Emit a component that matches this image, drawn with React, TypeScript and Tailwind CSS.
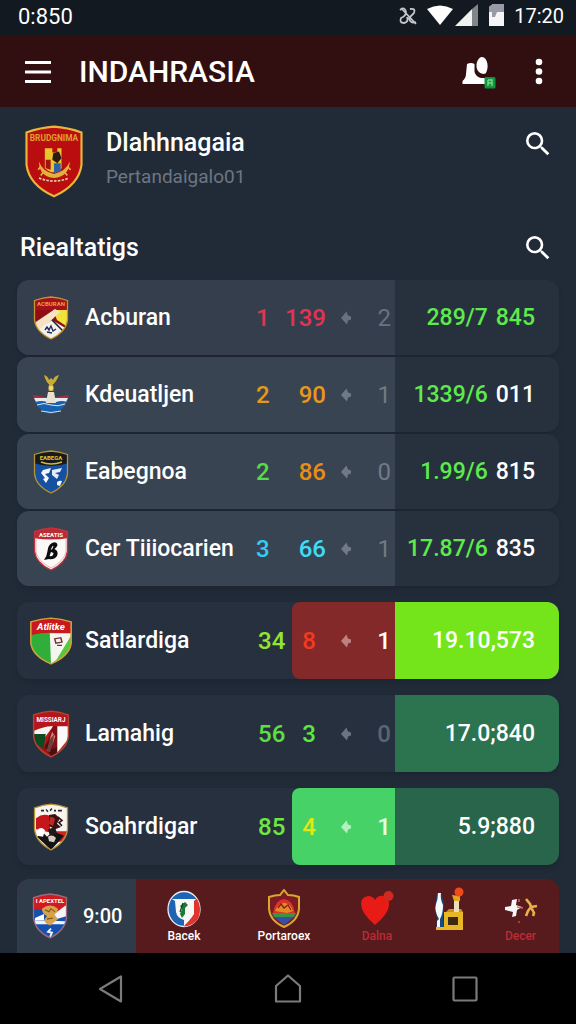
import type { ReactNode } from 'react'
import { MdSearch } from 'react-icons/md'
import clsx from 'clsx'

const SHIELD = 'M1.5 4.5Q10 1.5 18 1Q26 1.5 34.5 4.5V24Q33 36 18 43Q3 36 1.5 24Z'

type ShieldProps = {
  id: string
  border: string
  fill: string
  className?: string
  children?: ReactNode
}

function Shield({ id, border, fill, className, children }: ShieldProps) {
  return (
    <svg viewBox="0 0 36 44" preserveAspectRatio="none" className={className} aria-hidden="true">
      <clipPath id={id}>
        <path d={SHIELD} />
      </clipPath>
      <g clipPath={`url(#${id})`}>
        <rect width="36" height="44" fill={fill} />
        {children}
      </g>
      <path d={SHIELD} fill="none" stroke={border} strokeWidth="1.3" />
    </svg>
  )
}

function Banner({ text, fill, y = 10 }: { text: string; fill: string; y?: number }) {
  return (
    <text x="18" y={y} fontSize="6" fontWeight="700" textAnchor="middle" fill={fill}>
      {text}
    </text>
  )
}

function ClubCrest() {
  return (
    <Shield id="club" border="#e9b53a" fill="#b90d10" className="h-[73px] w-[60px]">
      <text x="18" y="9.5" fontSize="5" fontWeight="700" textAnchor="middle" fill="#e0a02c">
        BRUDGNIMA
      </text>
      <path d="M12.500 14H17V16.500H20V14H22.500V26Q18 31 12.500 26Z" fill="#e8c62c" />
      <path d="M17.500 17L21 16L22.500 20L20 23L17 21Z" fill="#2a1c14" />
      <path d="M18 23H22V28L18 29Z" fill="#2f62a8" />
      <path d="M13 21H16V27L13 26Z" fill="#a01410" />
      <path d="M9 22Q9 31 18 32Q27 31 27.500 22Q25 28 18 29.500Q11 28 9 22Z" fill="#e3b13b" />
      <path d="M10 25L8.500 27M12 28L10 30.500M26 25L28 27M24 28L26 30.500" stroke="#e3b13b" strokeWidth="1" />
      <path d="M9 32Q18 35.500 27 32" fill="none" stroke="#e7d9ae" strokeWidth="1" strokeDasharray="1.500 0.800" />
    </Shield>
  )
}

function AcburanCrest() {
  return (
    <Shield id="acburan" border="#c9932f" fill="#a3121a" className="h-11 w-9">
      <path d="M0 14H36V44H0Z" fill="#8d0f14" />
      <path d="M20 14H36V32L24 24Z" fill="#f0e43c" />
      <path d="M0 28L22 13L27 16L6 36Z" fill="#f6e3c4" />
      <path d="M5 34L19 24L34 33L18 44Z" fill="#f4f2ee" />
      <path d="M19 24L33 38" stroke="#20242a" strokeWidth="1.600" />
      <path d="M12 34L14 31L16 34L18 30L20 35L23 33M14 36L19 37" fill="none" stroke="#232c55" strokeWidth="1.400" />
      <Banner text="ACBURAN" fill="#e8a13a" />
    </Shield>
  )
}

function KdeuCrest() {
  return (
    <svg viewBox="0 0 38 42" className="h-[42px] w-[38px]" aria-hidden="true">
      <path d="M1 21L14 23H24L37 21L35 27H3Z" fill="#a92e38" />
      <path d="M2 24L36 24L34 28H4Z" fill="#e9e9ee" />
      <path d="M3 28Q10 26 15 28L19 29L24 28Q30 26 35 28Q30 38 19 40Q8 38 3 28Z" fill="#1760b0" />
      <path d="M5 31Q12 28 19 31Q26 33 33 30" fill="none" stroke="#d6e8f5" strokeWidth="1" />
      <path d="M9 37Q19 40 29 37" fill="none" stroke="#cfe1f0" strokeWidth="1" />
      <path d="M16 18H22L24 29H14Z" fill="#e7e1d2" />
      <path d="M17 17Q15 12 19 9Q23 12 21 17Z" fill="#d8b741" />
      <path d="M12 1Q14 9 19 12Q24 9 27 1Q22 2 21 6L19 4L17 6Q16 2 12 1Z" fill="#c9ab2f" />
      <circle cx="19" cy="14" r="2" fill="#f1dc83" />
    </svg>
  )
}

function EabeCrest() {
  return (
    <Shield id="eabe" border="#b8942f" fill="#1650a0" className="h-11 w-9">
      <path d="M0 0H36V13Q18 19 0 13Z" fill="#17191d" />
      <path d="M8 12Q18 16 29 12" fill="none" stroke="#d5ba33" strokeWidth="1.400" />
      <path d="M10 20L18 18L16 23L12 24L16 28L13 33L10 29L12 28L8 23Z" fill="#f3f6fa" />
      <path d="M19 20L29 18L27 22L22 23L26 25L24 29L19 25Z" fill="#e4edf6" />
      <path d="M24 32Q27 30 29 31L27 36L24 35Z" fill="#f3f6fa" />
      <Banner text="EABEGA" fill="#e2c432" />
    </Shield>
  )
}

function CerCrest() {
  return (
    <Shield id="cer" border="#c4303a" fill="#fbf8f8" className="h-11 w-9">
      <path d="M0 0H36V11Q18 14 0 11Z" fill="#b92c35" />
      <path d="M3 11V25Q5 34 18 41Q31 34 33 25V11" fill="none" stroke="#e7a4a8" strokeWidth="0.800" />
      <path
        d="M19 16Q24 14 24.500 18Q24 20 21.500 22Q26 24 24 29Q21 33 16 32L11 33Q14 29 14.500 24Q15 18 19 16ZM19.500 19L17.500 23Q20 22 20.500 19ZM18 25L16.500 29Q20 30 20.500 26Z"
        fill="#0d0d10"
        fillRule="evenodd"
      />
      <Banner text="ASEATIS" fill="#fff" />
    </Shield>
  )
}

function SatCrest() {
  return (
    <Shield id="sat" border="#d0a23a" fill="#2fae3a" className="h-12 w-11">
      <path d="M0 0H36V17Q18 12 0 17Z" fill="#c9181e" />
      <path d="M17 15H36L24 38L18 43Z" fill="#f5f5f0" />
      <path d="M35 16L21 42L36 30Z" fill="#55c93c" />
      <path d="M21 20L26 19L27 23L22 24ZM23 26H27" fill="none" stroke="#6f3434" strokeWidth="1.200" />
      <text x="18" y="12" fontSize="8" fontStyle="italic" fontWeight="700" textAnchor="middle" fill="#fff">
        Atlitke
      </text>
    </Shield>
  )
}

function LamCrest() {
  return (
    <Shield id="lam" border="#b4452f" fill="#b5161c" className="h-12 w-[38px]">
      <path d="M2 19Q14 14 20 15L10 28L2 22Z" fill="#f6f4f2" />
      <path d="M2 22L13 22L11 36L3 30Z" fill="#0c4a1f" />
      <path d="M20 15L11 36L18 42L24 40V15Z" fill="#831016" />
      <path d="M19 20L14 37L17 39L22 24Z" fill="#d98478" />
      <path d="M12 33L18 42H24V34L19 36L21 22Z" fill="#2b0c10" opacity="0.600" />
      <path d="M24 15H34V27L24 39Z" fill="#fbfafa" />
      <Banner text="MISSIARJ" fill="#fff" y={11} />
    </Shield>
  )
}

function SoahCrest() {
  return (
    <Shield id="soah" border="#b59334" fill="#f7f4f0" className="h-12 w-9">
      <path d="M3 14Q10 9 17 12V27L3 24Z" fill="#c5161b" />
      <path d="M22 26H36V34L24 36Z" fill="#cf2024" />
      <path d="M4 31L10 27L14 31L20 26L31 30L18 43Z" fill="#151213" />
      <path d="M4 25Q8 21 12 25L10 31L4 30Z" fill="#fff" />
      <path d="M16 11L22 10L27 14L24 19L28 22L22 24L16 21Z" fill="#3b1013" />
      <path d="M25 13L29 16L26 18L29 21" fill="none" stroke="#2a1416" strokeWidth="1.500" />
      <path d="M17 13Q20 12 22 15L20 21L16 19Z" fill="#be2a22" />
      <path d="M15 24L22 22L24 28L17 30Z" fill="#201a1a" />
      <path d="M15 31Q19 28 23 32L21 36L16 35Z" fill="#d3ccc4" />
      <path d="M8 7H11M13 6L15 8M17 7L19 5M21 7H23M25 7H29" fill="none" stroke="#23252b" strokeWidth="1.400" />
    </Shield>
  )
}

function TimeCrest() {
  return (
    <Shield id="time" border="#9c6a78" fill="#1550b0" className="h-[46px] w-9">
      <path d="M0 0H36V13L24 19L0 15Z" fill="#cf1a20" />
      <path d="M22 20L35 11V22L24 25Z" fill="#f5f5f8" />
      <path d="M0 26L36 27V30L0 30Z" fill="#eef2f9" />
      <path d="M3 24L12 20V26H3Z" fill="#fff" />
      <path d="M10 15Q18 9 26 15Q25 20 22 20L26 25L22 28L18 31L14 29L12 26L15 22Q10 20 10 15Z" fill="#d7a24a" />
      <path d="M13 16L17 18L19 15L23 18M15 25L21 24" fill="none" stroke="#79521b" strokeWidth="1" />
      <path d="M19 34L16 37L20 38L18 42" fill="none" stroke="#f2f6fb" strokeWidth="1.800" />
      <Banner text="I APEXTEL" fill="#fff" />
    </Shield>
  )
}

function Trend() {
  return (
    <svg viewBox="0 0 10 14" className="h-[14px] w-[10px]" aria-hidden="true">
      <path d="M0 7L5.500 0.500L7 4.500L10 5.500V8.500L7 9.500L6 13.500Z" fill="currentColor" />
    </svg>
  )
}

type Team = {
  name: string
  crest: ReactNode
  rank: string
  points: string
  diff: string
  total: string
  extra?: string
  rankColor: string
  pointsColor: string
  midColor: string
  totalColor: string
}

const topTeams: Team[] = [
  {
    name: 'Acburan', crest: <AcburanCrest />, rank: '1', points: '139', diff: '2', total: '289/7', extra: '845',
    rankColor: 'text-[#d93a52]', pointsColor: 'text-[#e23355]', midColor: 'bg-[#343e4c] text-[#69727c]', totalColor: 'text-[#5eea4c]',
  },
  {
    name: 'Kdeuatljen', crest: <KdeuCrest />, rank: '2', points: '90', diff: '1', total: '1339/6', extra: '011',
    rankColor: 'text-[#e39a1c]', pointsColor: 'text-[#e8981c]', midColor: 'bg-[#384452] text-[#717a84]', totalColor: 'text-white',
  },
  {
    name: 'Eabegnoa', crest: <EabeCrest />, rank: '2', points: '86', diff: '0', total: '1.99/6', extra: '815',
    rankColor: 'text-[#55dc45]', pointsColor: 'text-[#e98e13]', midColor: 'bg-[#384452] text-[#717a84]', totalColor: 'text-white',
  },
  {
    name: 'Cer Tiiiocarien', crest: <CerCrest />, rank: '3', points: '66', diff: '1', total: '17.87/6', extra: '835',
    rankColor: 'text-[#33cdf2]', pointsColor: 'text-[#3fdcf5]', midColor: 'bg-[#384452] text-[#717a84]', totalColor: 'text-white',
  },
]

const otherTeams = [
  {
    name: 'Satlardiga', crest: <SatCrest />, rank: '34', points: '8', diff: '1', total: '19.10,573',
    rankColor: 'text-[#93e62c]', pointsColor: 'text-[#f23a20]', scoreColor: 'bg-[#84292a]', trendColor: 'text-[#bf8080]', diffColor: 'text-white', totalBg: 'bg-[#75e51b]',
  },
  {
    name: 'Lamahig', crest: <LamCrest />, rank: '56', points: '3', diff: '0', total: '17.0;840',
    rankColor: 'text-[#5be03d]', pointsColor: 'text-[#5ce843]', scoreColor: '', trendColor: 'text-[#6b747f]', diffColor: 'text-[#5c6571]', totalBg: 'bg-[#2c7450]',
  },
  {
    name: 'Soahrdigar', crest: <SoahCrest />, rank: '85', points: '4', diff: '1', total: '5.9;880',
    rankColor: 'text-[#6fe743]', pointsColor: 'text-[#e3e514]', scoreColor: 'bg-[#47d267]', trendColor: 'text-[#b4f0be]', diffColor: 'text-[#e5ffe9]', totalBg: 'bg-[#28654a]',
  },
]

function TeamLabel({ crest, name }: { crest: ReactNode; name: string }) {
  return (
    <>
      <span className="flex w-[68px] shrink-0 justify-center">{crest}</span>
      <span className="flex-1 whitespace-nowrap text-[23px] leading-8 font-medium">{name}</span>
    </>
  )
}

function TopRow({ team }: { team: Team }) {
  return (
    <li className="flex h-[75px] overflow-hidden rounded-xl bg-[#27303d] shadow-md">
      <div className={clsx('flex flex-1 items-center', team.midColor)}>
        <div className="flex flex-1 items-center text-white">
          <TeamLabel crest={team.crest} name={team.name} />
        </div>
        <span className={clsx('w-9 text-[24px] leading-8 font-medium', team.rankColor)}>{team.rank}</span>
        <div className="flex w-[103px] items-center text-[24px] leading-8">
          <span className={clsx('flex w-[34px] justify-end font-medium', team.pointsColor)}>{team.points}</span>
          <span className="flex w-10 justify-center"><Trend /></span>
          <span className="flex-1 pr-1 text-right">{team.diff}</span>
        </div>
      </div>
      <div className="flex w-[164px] items-center justify-end gap-2 pr-6 text-[23px] leading-8 font-medium">
        <span className="text-[#5eea4c]">{team.total}</span>
        <span className={team.totalColor}>{team.extra}</span>
      </div>
    </li>
  )
}

function OtherRow({ team }: { team: (typeof otherTeams)[number] }) {
  return (
    <li className="flex h-[77px] overflow-hidden rounded-xl bg-[#27303e] shadow-md">
      <div className="flex flex-1 items-center">
        <TeamLabel crest={team.crest} name={team.name} />
        <span className={clsx('w-[34px] text-[24px] leading-8 font-medium', team.rankColor)}>{team.rank}</span>
      </div>
      <div className={clsx('flex w-[103px] items-center rounded-l-lg text-[24px] leading-8 font-medium', team.scoreColor)}>
        <span className={clsx('flex w-[34px] justify-center', team.pointsColor)}>{team.points}</span>
        <span className={clsx('flex w-10 justify-center', team.trendColor)}><Trend /></span>
        <span className={clsx('flex-1 pr-1 text-right', team.diffColor)}>{team.diff}</span>
      </div>
      <div className={clsx('flex w-[164px] items-center justify-end pr-6 text-[23px] leading-8 font-medium', team.totalBg)}>
        {team.total}
      </div>
    </li>
  )
}

function StatusBar() {
  return (
    <div className="flex h-9 items-center justify-between bg-[#131921] pr-3 pb-1 pl-[18px]">
      <span className="text-[22px]">0:850</span>
      <div className="flex items-center">
        <svg viewBox="0 0 108 24" className="h-6 w-[108px]" aria-hidden="true">
          <path d="M2 6Q7 2 8 8Q8 12 3 14Q1 19 6 19Q11 18 9 13M12 5Q18 4 16 9L11 14Q12 20 18 18M3 4L18 20" fill="none" stroke="#c3c7cb" strokeWidth="1.800" />
          <path d="M29 5Q42 -2 55 5L42 21Z" fill="#fff" />
          <path d="M57 22L74 5V22Z" fill="#f0f2f2" />
          <path d="M74 5L80 0V22H74Z" fill="#7f8588" />
          <path d="M91 3L95 0H106V22H91Z" fill="#f5f5f8" />
          <path d="M91 3L95 0H106V8H99L97 13H94V8H91Z" fill="#9a9aa6" />
        </svg>
        <span className="ml-2 text-xl">17:20</span>
      </div>
    </div>
  )
}

function AppBar() {
  return (
    <header className="flex h-[71px] items-center bg-[#310e10] pr-[25px] pl-6">
      <button aria-label="Menu" className="flex w-[55px] items-center">
        <svg viewBox="0 0 28 24" className="h-6 w-7" aria-hidden="true">
          <path d="M1 2.500H27M1 12H27M1 21.500H27" stroke="#fff" strokeWidth="3" />
        </svg>
      </button>
      <h1 className="flex-1 text-[30px] font-medium">INDAHRASIA</h1>
      <button aria-label="Notifications">
        <svg viewBox="0 0 36 34" className="h-[34px] w-9" aria-hidden="true">
          <path d="M6 9Q10 7 13.500 9V17Q15 22 20 23H25V29H1.500V26Q5 23 5 19Z" fill="#fff" />
          <path d="M21 2Q25 2 26.500 9Q27 15 24.500 18.500Q20 20 17 16Q14.500 12 16 7Q18 2 21 2Z" fill="#fff" />
          <rect x="23.500" y="22" width="11" height="11.500" rx="1.500" fill="#12933f" />
          <path d="M27 25V31M27 25H31V28H27M31 28V31" fill="none" stroke="#7be08e" strokeWidth="1.300" />
        </svg>
      </button>
      <button aria-label="More options" className="ml-[30px] flex w-6 justify-center">
        <svg viewBox="0 0 8 28" className="h-7 w-2" aria-hidden="true">
          <circle cx="4" cy="4" r="3.300" fill="#fff" />
          <circle cx="4" cy="13.500" r="3.300" fill="#fff" />
          <circle cx="4" cy="23" r="3.300" fill="#fff" />
        </svg>
      </button>
    </header>
  )
}

const tabs = [
  {
    label: 'Bacek',
    color: 'text-white',
    icon: (
      <svg viewBox="0 0 34 38" className="h-[38px] w-[34px]" aria-hidden="true">
        <ellipse cx="17" cy="19" rx="16" ry="17.500" fill="#1f63b5" stroke="#e8eef5" strokeWidth="1.300" />
        <path d="M17 36.500Q33 35 33 19Q33 14 30 9L24 11V26Z" fill="#e0342c" />
        <path d="M5 9H29L27 11V24Q24 29 17 36V30Q10 28 9 22L8 11Z" fill="#f7f8f6" />
        <path d="M13 16L18 12L21 15L18 18V24L15 28L13 24L15 19Z" fill="#1c7a36" />
        <path d="M16 13L13 22" stroke="#163d22" strokeWidth="1.200" />
      </svg>
    ),
  },
  {
    label: 'Portaroex',
    color: 'text-white',
    icon: (
      <svg viewBox="0 0 34 40" className="h-10 w-[34px]" aria-hidden="true">
        <path d="M17 1L21 6Q27 6 32 8V20Q31 32 17 38Q3 32 2 20V8Q8 6 13 6Z" fill="#7e1a24" stroke="#d9a92f" strokeWidth="2" />
        <path d="M6 24Q8 11 17 10Q26 11 28 24Z" fill="#d8342a" />
        <path d="M8 22Q12 13 18 14Q24 15 26 22L20 24L14 23Z" fill="#e58a27" />
        <path d="M5 24H29L27 28H7Z" fill="#3a9448" />
        <path d="M7 28H27L17 36Z" fill="#3451a5" />
        <path d="M11 19L14 15L17 19L21 16L24 21" fill="none" stroke="#8a2018" strokeWidth="1.400" />
      </svg>
    ),
  },
  {
    label: 'Dalna',
    color: 'text-[#bb2c35]',
    icon: (
      <svg viewBox="0 0 34 38" className="h-[38px] w-[34px]" aria-hidden="true">
        <path d="M15 35Q1 23 1 14Q1 7 8 6Q13 6 15 10Q18 5 23 6Q30 8 29 16Q28 24 15 35Z" fill="#e81b17" />
        <circle cx="28.500" cy="6" r="5" fill="#cf2a20" />
      </svg>
    ),
  },
  {
    label: '',
    color: '',
    icon: (
      <svg viewBox="0 0 32 44" className="h-11 w-8" aria-hidden="true">
        <path d="M3 6H7L10 17L9 30L10 43H2L3 32L1 20Z" fill="#174a80" />
        <path d="M4 6H7Q6 12 9 18Q9 27 6 32V42H3V34L5 32Q0 24 2 17Q4 12 4 6Z" fill="#f6fafc" />
        <path d="M10 25H29V43H2V40H10Z" fill="#e9b626" />
        <path d="M12 25L15 22H27L29 25" fill="#d38d1b" />
        <rect x="14" y="30" width="10" height="8" fill="#3c2914" />
        <path d="M20 13H25V25H20Z" fill="#eadfba" />
        <path d="M18 8L26 9V14H20Z" fill="#e3a323" />
        <circle cx="25" cy="5" r="4.500" fill="#f04a17" />
      </svg>
    ),
  },
  {
    label: 'Decer',
    color: 'text-[#bb2c35]',
    icon: (
      <svg viewBox="0 0 34 30" className="h-[30px] w-[34px]" aria-hidden="true">
        <path d="M8 6L13 5L12 11L18 13L13 16L12 22L8 23L9 18L1 16V13L7 12Z" fill="#f8f6f6" />
        <path d="M13 13L19 14M15 5V8" stroke="#e86b64" strokeWidth="1.400" />
        <path d="M22 5L26 10L27 13L33 12M27 13L24 17L22 22M27 13L30 19L29 22" fill="none" stroke="#e8b04a" strokeWidth="2.600" />
        <circle cx="15" cy="28" r="1" fill="#e23b36" />
      </svg>
    ),
  },
]

function BottomBar() {
  return (
    <div className="mx-[17px] mt-[14px] flex h-[74px] overflow-hidden rounded-t-xl bg-[#571a1d]">
      <div className="flex w-[119px] items-center bg-[#2f3b48]">
        <span className="flex w-[66px] justify-center"><TimeCrest /></span>
        <span className="text-xl font-medium">9:00</span>
      </div>
      <nav className="grid flex-1 grid-cols-[96fr_104fr_82fr_64fr_77fr] pt-[10px]">
        {tabs.map((tab, i) => (
          <a key={i} href="#" className={clsx('flex flex-col items-center', tab.color)} aria-label={tab.label || 'Trophies'}>
            <span className="flex h-10 items-center">{tab.icon}</span>
            {tab.label && <span className="text-xs leading-[14px] font-medium">{tab.label}</span>}
          </a>
        ))}
      </nav>
    </div>
  )
}

function SystemNav() {
  return (
    <div className="flex h-[71px] items-center bg-black px-[22px] text-[#7d7b79]">
      <button aria-label="Back" className="flex flex-1 justify-center">
        <svg viewBox="0 0 30 30" className="h-[30px] w-[30px]" fill="none" stroke="currentColor" strokeWidth="2.200" strokeLinejoin="round">
          <path d="M25 2.500V27.500L4 15Z" />
        </svg>
      </button>
      <button aria-label="Home" className="flex flex-1 justify-center">
        <svg viewBox="0 0 30 30" className="h-[30px] w-[30px]" fill="none" stroke="currentColor" strokeWidth="2.200" strokeLinejoin="round">
          <path d="M15 1.500L27 12V27.500H3V12Z" />
        </svg>
      </button>
      <button aria-label="Recent apps" className="flex flex-1 justify-center">
        <svg viewBox="0 0 30 30" className="h-[30px] w-[30px]" fill="none" stroke="currentColor" strokeWidth="2.200" strokeLinejoin="round">
          <rect x="3.500" y="3.500" width="23" height="23" rx="1" />
        </svg>
      </button>
    </div>
  )
}

export default function App() {
  return (
    <div className="flex min-h-screen flex-col bg-[#212b38] font-[Roboto,sans-serif] text-white">
      <StatusBar />
      <AppBar />

      <main className="flex-1">
        {/* Club header */}
        <section className="flex items-start px-[22px] pt-[18px]">
          <span className="flex w-16 justify-center"><ClubCrest /></span>
          <div className="ml-5 flex-1">
            <h2 className="text-[25px] leading-9 font-medium">Dlahhnagaia</h2>
            <p className="text-[19px] leading-8 text-[#6c7682]">Pertandaigalo01</p>
          </div>
          <button aria-label="Search club" className="pt-[3px]">
            <MdSearch size={32} />
          </button>
        </section>

        {/* Standings */}
        <div className="mt-[30px] flex h-10 items-center justify-between pr-[22px] pl-5">
          <h2 className="text-[25px] font-medium">Riealtatigs</h2>
          <button aria-label="Search standings">
            <MdSearch size={32} />
          </button>
        </div>
        <ul className="mx-[17px] mt-3 flex flex-col gap-[2px]">
          {topTeams.map((team) => (
            <TopRow key={team.name} team={team} />
          ))}
        </ul>
        <ul className="mx-[17px] mt-4 flex flex-col gap-4">
          {otherTeams.map((team) => (
            <OtherRow key={team.name} team={team} />
          ))}
        </ul>
      </main>

      <BottomBar />
      <SystemNav />
    </div>
  )
}
